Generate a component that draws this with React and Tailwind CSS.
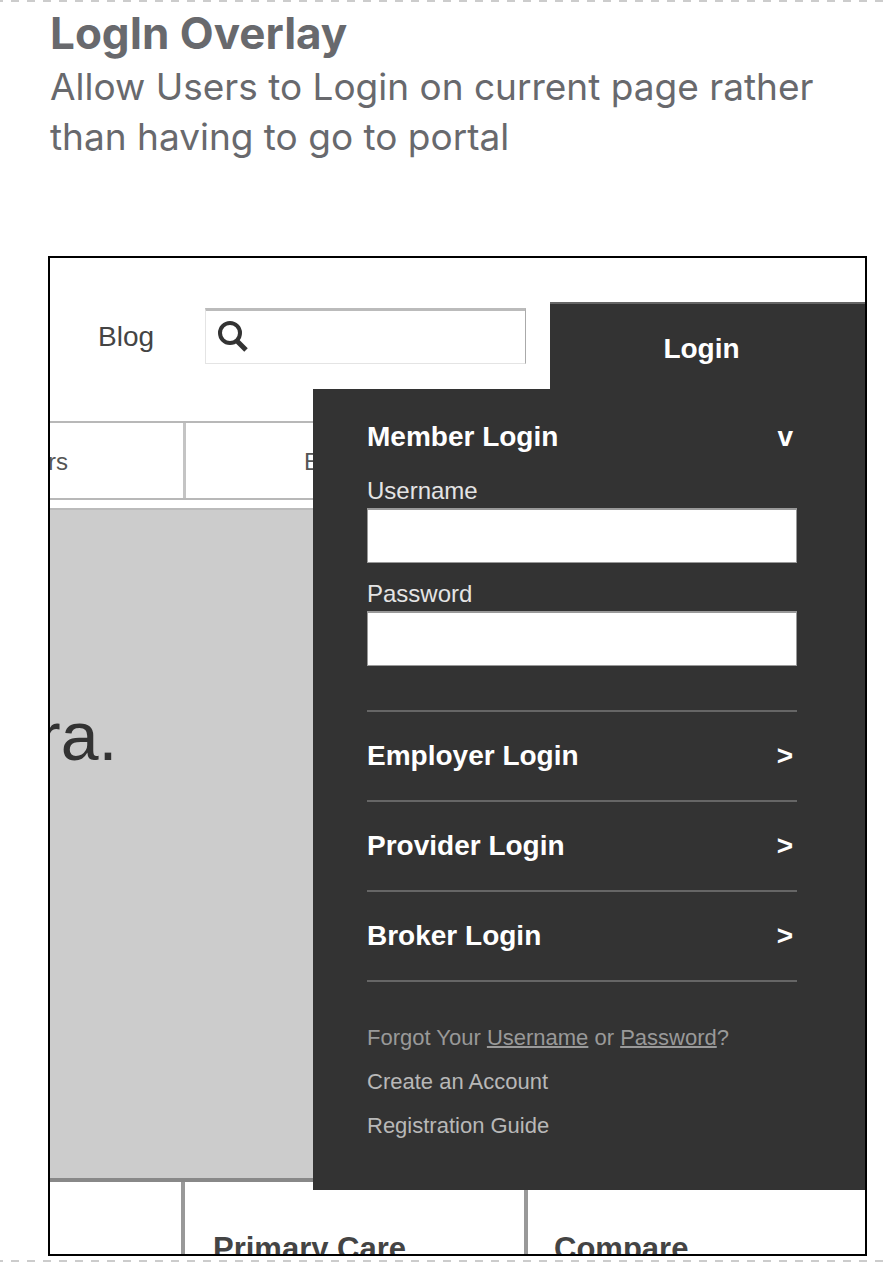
import React, { useState } from "react";

const portals = ["Employer Login", "Provider Login", "Broker Login"];

const Field = ({ id, label, type }) => {
  const [value, setValue] = useState("");

  return (
    <div>
      <label htmlFor={id} className="block text-2xl leading-7 text-[#e4e4e4]">
        {label}
      </label>
      <input
        id={id}
        type={type}
        value={value}
        onChange={(e) => setValue(e.target.value)}
        className="mt-[3px] block h-[55px] w-full border border-t-2 border-[#999] bg-white px-3 text-2xl text-[#333] outline-none"
      />
    </div>
  );
};

const LoginOverlay = () => {
  return (
    <div className="absolute top-11 right-0 w-[552px]">
      {/* Tab */}
      <button className="ml-auto block h-[87px] w-[315px] border-t-2 border-[#666] bg-[#333] pt-1 pr-3 text-[28px] leading-8 font-bold text-white">
        Login
      </button>

      {/* Panel */}
      <div className="bg-[#333] pt-8 pr-[68px] pb-[42px] pl-[54px]">
        <button className="flex w-full items-center justify-between pr-1 text-[28px] leading-8 font-bold text-white">
          <span>Member Login</span>
          <span>v</span>
        </button>

        <form className="mt-6 flex flex-col gap-[17px]">
          <Field id="username" label="Username" type="text" />
          <Field id="password" label="Password" type="password" />
        </form>

        <ul className="mt-11 border-t-2 border-[#666]">
          {portals.map((portal) => (
            <li key={portal} className="border-b-2 border-[#666]">
              <button className="flex h-[88px] w-full items-center justify-between pr-1 text-[28px] leading-8 font-bold text-white">
                <span>{portal}</span>
                <span>&gt;</span>
              </button>
            </li>
          ))}
        </ul>

        <div className="mt-[34px] text-[22px] leading-[44px] text-[#b8b8b8]">
          <p className="text-[#999]">
            Forgot Your{" "}
            <a href="#username" className="underline decoration-2">Username</a>
            {" or "}
            <a href="#password" className="underline decoration-2">Password</a>?
          </p>
          <a href="#create" className="block">Create an Account</a>
          <a href="#guide" className="block">Registration Guide</a>
        </div>
      </div>
    </div>
  );
};

const SitePage = () => {
  return (
    <div>
      {/* Top bar */}
      <div className="flex h-[163px] items-start pt-[50px] pl-12">
        <a href="#blog" className="w-[107px] text-[28px] leading-[58px] text-[#444]">Blog</a>
        <div className="flex h-14 w-[321px] items-center border border-t-3 border-[#e4e4e4] border-t-[#bbb] border-r-[#aaa] pl-3">
          <svg viewBox="0 0 32 32" className="h-8 w-8 shrink-0" fill="none" stroke="#333" aria-hidden="true">
            <circle cx="12" cy="12" r="10" strokeWidth="4" />
            <path d="M19 20l9 9" strokeWidth="5" />
          </svg>
          <input type="search" aria-label="Search" className="h-full w-full min-w-0 px-2 text-2xl outline-none" />
        </div>
      </div>

      {/* Main nav */}
      <nav className="flex h-[79px] border-y-2 border-[#b8b8b8] text-2xl leading-[77px] text-[#555]">
        <a href="#members" className="-ml-0.5 w-[138px] border-r-3 border-[#c4c4c4]">rs</a>
        <a href="#employers" className="pl-[118px]">E</a>
      </nav>

      {/* Hero */}
      <div className="mt-2 h-[674px] border-t-2 border-b-4 border-t-[#bbb] border-b-[#888] bg-[#ccc] pt-[186px]">
        <p className="-ml-3 text-[68px] leading-[80px] text-[#333]">ra.</p>
      </div>

      {/* Column teasers */}
      <div className="flex h-[72px] overflow-hidden pl-[131px] text-[31px] leading-9 font-bold text-[#444]">
        <h2 className="w-[343px] shrink-0 border-l-4 border-[#999] pt-[49px] pl-7">Primary Care</h2>
        <h2 className="grow border-l-4 border-[#999] pt-[49px] pl-[26px]">Compare</h2>
      </div>
    </div>
  );
};

const App = () => {
  return (
    <main className="bg-white font-['Liberation_Sans',Arial,sans-serif]">
      <div className="h-0.5 bg-[repeating-linear-gradient(90deg,#ccc_0_3px,transparent_3px_11px,#ccc_11px_16px)]" />

      <header className="pt-1 pl-[50px] font-['Inter',sans-serif] text-[#68696d]">
        <h1 className="text-[44px] leading-[54px] font-bold">LogIn Overlay</h1>
        <p className="mt-0.5 max-w-[800px] text-[37px] leading-[50px]">
          Allow Users to Login on current page rather than having to go to portal
        </p>
      </header>

      <section className="relative mt-[94px] mr-[17px] mb-1 ml-12 overflow-hidden border-2 border-black">
        <SitePage />
        <LoginOverlay />
      </section>

      <div className="h-0.5 bg-[repeating-linear-gradient(90deg,#ccc_0_3px,transparent_3px_11px,#ccc_11px_16px)]" />
    </main>
  );
};

export default App;
